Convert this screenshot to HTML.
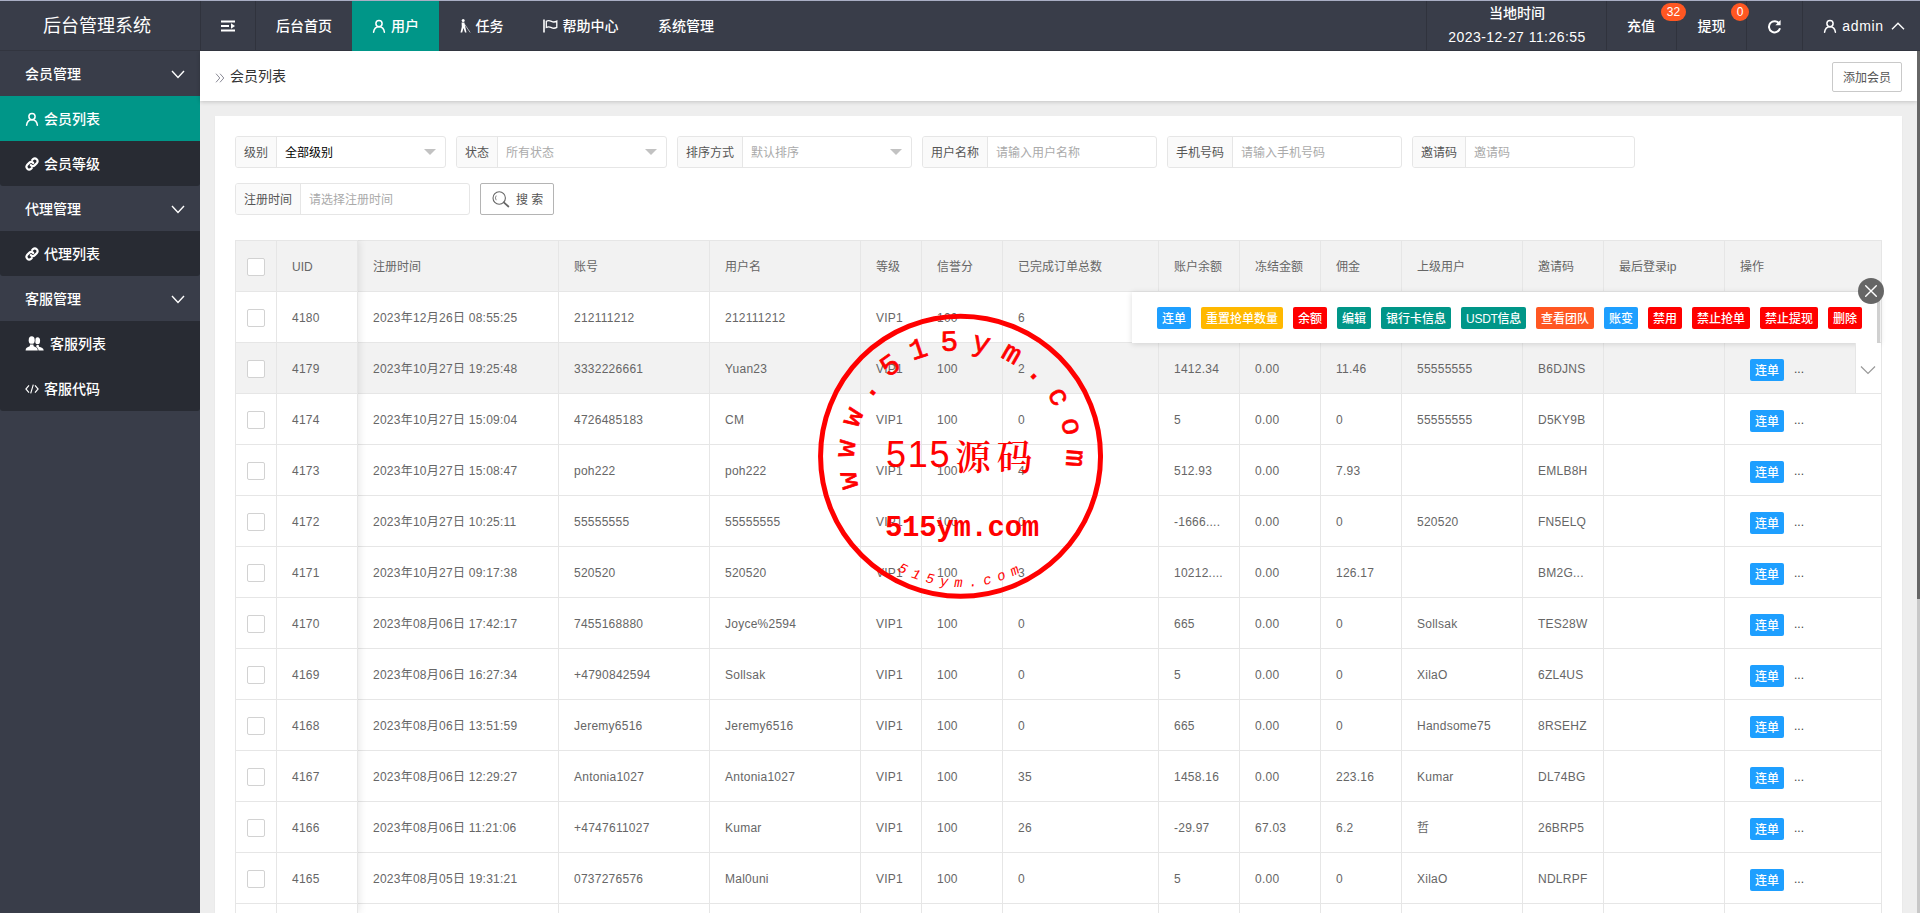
<!DOCTYPE html>
<html lang="zh-CN">
<head>
<meta charset="utf-8">
<title>后台管理系统</title>
<style>
*{box-sizing:border-box;margin:0;padding:0}
html,body{width:1920px;height:913px;overflow:hidden}
body{font-family:"Liberation Sans","Noto Sans CJK SC",sans-serif;font-size:14px;color:#333;background:#eee;position:relative}
ul{list-style:none}
.abs{position:absolute}
/* top line */
#topline{position:absolute;left:0;top:0;width:1920px;height:1px;background:#a9aec4;z-index:50}
/* header */
#header{position:absolute;left:0;top:0;width:1920px;height:51px;background:#393d49;color:#fff;z-index:10;font-weight:500}
#logo{font-weight:normal;position:absolute;left:0;top:1px;width:200px;height:49px;line-height:51px;text-align:center;font-size:18px;color:#fff;padding-right:6px}
#header .hline{position:absolute;left:0;top:50px;width:1920px;height:1px;background:#32353f}
.nav{position:absolute;top:1px;height:49px;line-height:51px;font-size:14px;color:#fff;text-align:center;white-space:nowrap}
.nav.bl{border-left:1px solid #30333d}
.nav svg{vertical-align:middle;position:relative;top:-1px}
.badge{font-weight:normal;position:absolute;top:3px;height:18px;line-height:18px;border-radius:9px;background:#ff5722;color:#fff;font-size:12px;text-align:center;z-index:3}
/* sidebar */
#side{position:absolute;left:0;top:51px;width:200px;height:862px;background:#393d49;color:#fff;font-weight:500}
#side .grp{height:45px;line-height:47px;padding-left:25px;font-size:14px;position:relative}
#side .grp svg{position:absolute;right:15px;top:19px}
#side .sub{background:#282b33;border-radius:0 0 3px 3px}
#side .it{height:45px;line-height:47px;padding-left:25px;font-size:14px;white-space:nowrap}
#side .it svg{vertical-align:middle;position:relative;top:-1px;margin-right:5px}
#side .it.on{background:#009688}
/* breadcrumb */
#crumb{position:absolute;left:200px;top:51px;width:1717px;height:50px;background:#fff;box-shadow:0 1px 4px rgba(0,0,0,.18)}
#crumb .t{position:absolute;left:30px;top:0;line-height:51px;font-size:14px;color:#333}
#crumb .t i{font-style:normal;color:#999;margin-right:4px}
#addbtn{position:absolute;left:1632px;top:11px;width:70px;height:30px;line-height:30px;border:1px solid #c9c9c9;border-radius:2px;font-size:12px;color:#555;text-align:center;background:#fff}
/* scrollbar */
#sbt{position:absolute;left:1917px;top:51px;width:3px;height:862px;background:#c8c8c8}
#sbh{position:absolute;left:1917px;top:51px;width:3px;height:548px;background:#666}
/* card */
#card{position:absolute;left:215px;top:116px;width:1687px;height:797px;background:#fff;box-shadow:0 1px 2px rgba(0,0,0,.05)}

/* filters */
.fg{position:absolute;height:32px;border:1px solid #e6e6e6;border-radius:3px;background:#fff;font-size:12px;overflow:hidden}
.fg .lb{position:absolute;left:0;top:0;height:30px;line-height:32px;background:#fafafa;border-right:1px solid #e6e6e6;color:#555;text-align:center;white-space:nowrap}
.fg .in{position:absolute;top:0;height:30px;line-height:32px;padding-left:8px;color:#aaa;white-space:nowrap}
.fg .in.v{color:#000}
.fg .tri{position:absolute;right:9px;top:12px;width:0;height:0;border-left:6px solid transparent;border-right:6px solid transparent;border-top:6px solid #c2c2c2}
#sbtn{position:absolute;left:265px;top:67px;width:74px;height:32px;border:1px solid #b4b4b4;border-radius:2px;background:#fff;font-size:12px;color:#555;line-height:32px;white-space:nowrap}
#sbtn svg{position:absolute;left:11px;top:7px}
#sbtn span{position:absolute;left:35px;top:0}
/* table */
#tbl{position:absolute;left:20px;top:124px;width:1647px;border-collapse:separate;border-spacing:0;table-layout:fixed;font-size:12px;color:#666;border-top:1px solid #e6e6e6;border-left:1px solid #e6e6e6}
#tbl th,#tbl td{height:51px;border-right:1px solid #e6e6e6;border-bottom:1px solid #e6e6e6;padding:0 0 0 15px;text-align:left;font-weight:normal;white-space:nowrap;overflow:hidden;vertical-align:middle;letter-spacing:.25px;line-height:20px;padding-top:1px}
#tbl th{background:#f2f2f2;letter-spacing:0}
#tbl tr.hov td{background:#f2f2f2}
#tbl td.c,#tbl th.c{padding:0;text-align:center;letter-spacing:0}
.cb{display:inline-block;width:18px;height:18px;border:1px solid #d2d2d2;border-radius:2px;background:#fff;vertical-align:middle;position:relative;top:0}
.xs{display:inline-block;height:22px;line-height:24px;padding:0 5px;border-radius:2px;color:#fff;font-size:12px;font-weight:500;letter-spacing:0;vertical-align:middle;white-space:nowrap}
.b-blue{background:#1e9fff}.b-warm{background:#ffb800}.b-red{background:#ff0000}.b-teal{background:#009688}.b-org{background:#ff5722}
#tbl td.op{padding-left:25px}
#tbl td.op .xs{position:relative;top:1.500px}
#tbl td.op em{color:#444;font-style:normal;margin-left:10px;position:relative;top:1px;letter-spacing:0}
#fixshadow{position:absolute;left:20px;top:124px;width:123px;height:673px;box-shadow:1px 0 8px rgba(0,0,0,.10);pointer-events:none;clip-path:inset(0 -12px 0 0)}
/* tips panel */
#tips{position:absolute;left:917px;top:176px;width:748px;height:51px;background:#fff;box-shadow:0 1px 6px rgba(0,0,0,.14);white-space:nowrap;padding:15px 0 0 25px;font-size:0}
#tips .xs{margin-right:10px}
#tips .bar{position:absolute;right:0;top:0;width:3px;height:51px;background:#d0d0d0}
#tipx{position:absolute;left:1643px;top:162px;width:26px;height:26px;border-radius:13px;background:#666}
#griddown{position:absolute;left:1640px;top:227px;width:26px;height:50px;background:#fff;border-left:1px solid #e6e6e6}

/* stamp */
#stamp{position:absolute;left:810px;top:306px;z-index:5;pointer-events:none}
</style>
</head>
<body>
<div id="header">
  <div id="logo">后台管理系统</div>

  <div class="nav bl" style="left:200px;width:55px"><svg width="14" height="14" viewBox="0 0 14 14" fill="#fff"><rect x="0" y="1.500" width="14" height="2"/><rect x="0" y="6" width="8" height="2"/><rect x="0" y="10.500" width="14" height="2"/><path d="M10 4.300l4 2.700-4 2.700z"/></svg></div>
  <div class="nav bl" style="left:255px;width:97px">后台首页</div>
  <div class="nav" style="left:352px;width:87px;background:#009688;top:1px;height:50px;z-index:2"><svg width="14" height="14" viewBox="0 0 14 14" fill="none" stroke="#fff" stroke-width="1.5" stroke-linecap="round"><circle cx="7" cy="4.6" r="3.1"/><path d="M1.6 13.2c.4-3.3 2.5-5.4 5.4-5.4s5 2.100 5.400 5.400"/></svg><span style="margin-left:5px">用户</span></div>
  <div class="nav" style="left:439px;width:84px"><svg width="12" height="14" viewBox="0 0 12 14" fill="#fff"><circle cx="4.200" cy="1.500" r="1.500"/><path d="M2.600 3.400h2.800l.8 4.200 1.300 5.900H6l-1.500-4.600-1.300 4.600H1.500l1.300-5.700z"/><path d="M5.600 5.200l5.600 8.300" stroke="#fff" stroke-width=".6"/></svg><span style="margin-left:5px">任务</span></div>
  <div class="nav" style="left:523px;width:115px"><svg width="15" height="14" viewBox="0 0 15 14" fill="none" stroke="#fff" stroke-width="1.300"><path d="M1 .5v13" stroke-width="1.600"/><path d="M3.300 2.200c2-1.100 3.600-.6 5.200.2 1.600.8 3.400.8 5.300-.3v6.300c-1.900 1.100-3.700 1.100-5.300.3-1.600-.8-3.200-1.300-5.200-.2z"/></svg><span style="margin-left:5px">帮助中心</span></div>
  <div class="nav" style="left:638px;width:96px">系统管理</div>

  <div class="nav bl" style="left:1426px;width:180px;line-height:normal"><div style="position:absolute;left:0;width:180px;top:2px;line-height:20px">当地时间</div><div style="position:absolute;left:0;width:180px;top:26px;line-height:20px;letter-spacing:.45px">2023-12-27 11:26:55</div></div>
  <div class="nav bl" style="left:1606px;width:69px">充值</div>
  <div class="nav bl" style="left:1676px;width:70px">提现</div>
  <div class="badge" style="left:1661px;width:25px">32</div>
  <div class="badge" style="left:1731px;width:18px">0</div>
  <div class="nav bl" style="left:1746px;width:55px"><svg width="15" height="15" viewBox="0 0 15 15" fill="none" stroke="#fff" stroke-width="2"><path d="M12.300 4.700A5.600 5.600 0 1 0 13 9.300"/><path d="M13.600 1v5.200H8.400z" fill="#fff" stroke="none"/></svg></div>
  <div class="nav bl" style="left:1802px;width:115px;padding-left:8px"><svg width="14" height="14" viewBox="0 0 14 14" fill="none" stroke="#fff" stroke-width="1.5" stroke-linecap="round"><circle cx="7" cy="4.6" r="3.1"/><path d="M1.6 13.2c.4-3.3 2.5-5.4 5.4-5.4s5 2.100 5.400 5.400"/></svg><span style="margin-left:5px;letter-spacing:.7px">admin</span><svg width="14" height="8" viewBox="0 0 14 8" fill="none" stroke="#fff" stroke-width="1.400" style="margin-left:7px"><path d="M1 7.200l6-6 6 6"/></svg></div>
  <div class="hline"></div>
</div>
<div id="topline"></div>
<div id="side">
  <div class="grp">会员管理<svg width="14" height="9" viewBox="0 0 14 9" fill="none" stroke="#fff" stroke-width="1.400"><path d="M1 1l6 6.500L13 1"/></svg></div>
  <div class="sub"><div class="it on"><svg width="14" height="14" viewBox="0 0 14 14" fill="none" stroke="#fff" stroke-width="1.5" stroke-linecap="round"><circle cx="7" cy="4.6" r="3.1"/><path d="M1.6 13.2c.4-3.3 2.5-5.4 5.4-5.4s5 2.100 5.400 5.400"/></svg>会员列表</div><div class="it"><svg width="14" height="14" viewBox="0 0 15 15" fill="none" stroke="#fff" stroke-width="2.300" stroke-linecap="round"><path d="M6.300 8.700a3 3 0 0 0 4.200 0l2.300-2.300a3 3 0 0 0-4.200-4.200l-.9.900"/><path d="M8.700 6.300a3 3 0 0 0-4.200 0L2.200 8.600a3 3 0 0 0 4.200 4.200l.9-.9"/></svg>会员等级</div></div>
  <div class="grp">代理管理<svg width="14" height="9" viewBox="0 0 14 9" fill="none" stroke="#fff" stroke-width="1.400"><path d="M1 1l6 6.500L13 1"/></svg></div>
  <div class="sub"><div class="it"><svg width="14" height="14" viewBox="0 0 15 15" fill="none" stroke="#fff" stroke-width="2.300" stroke-linecap="round"><path d="M6.300 8.700a3 3 0 0 0 4.200 0l2.300-2.300a3 3 0 0 0-4.200-4.200l-.9.900"/><path d="M8.700 6.300a3 3 0 0 0-4.200 0L2.200 8.600a3 3 0 0 0 4.200 4.200l.9-.9"/></svg>代理列表</div></div>
  <div class="grp">客服管理<svg width="14" height="9" viewBox="0 0 14 9" fill="none" stroke="#fff" stroke-width="1.400"><path d="M1 1l6 6.500L13 1"/></svg></div>
  <div class="sub"><div class="it"><svg width="20" height="15" viewBox="0 0 20 15" fill="#fff" style="top:-2px"><ellipse cx="12.600" cy="4.800" rx="2.500" ry="3.500"/><path d="M8 14.500c0-2.300 1.300-3 3.300-3.800l.3-1.700h2.100l.3 1.700c2.400.8 4.700 1.500 4.700 3.800z"/><g stroke="#282b33" stroke-width="1.400" paint-order="stroke"><ellipse cx="6.700" cy="4.300" rx="3" ry="4"/><path d="M.6 14.500c0-2.600 1.700-3.300 4.100-4.200l.4-1.800h3.200l.4 1.800c2.400.9 4.100 1.600 4.100 4.200z"/></g></svg>客服列表</div><div class="it"><svg width="14" height="10" viewBox="0 0 14 10" fill="none" stroke="#fff" stroke-width="1.150"><path d="M4 1.400L.9 5 4 8.600M10 1.400L13.100 5 10 8.600M8.300.6L5.700 9.400"/></svg>客服代码</div></div>
</div>
<div id="crumb">
  <svg style="position:absolute;left:15px;top:22px" width="10" height="10" viewBox="0 0 10 10" fill="none" stroke="#8a8a96" stroke-width="1"><path d="M1 .7l3.800 4.300L1 9.300M5 .7l3.800 4.300L5 9.300"/></svg><div class="t">会员列表</div>
  <div id="addbtn">添加会员</div>
</div>
<div id="sbt"></div><div id="sbh"></div>
<div id="card">
<div class="fg" style="left:20px;top:20px;width:211px"><div class="lb" style="width:41px">级别</div><div class="in v" style="left:41px">全部级别</div><div class="tri"></div></div><div class="fg" style="left:241px;top:20px;width:211px"><div class="lb" style="width:41px">状态</div><div class="in" style="left:41px">所有状态</div><div class="tri"></div></div><div class="fg" style="left:462px;top:20px;width:235px"><div class="lb" style="width:65px">排序方式</div><div class="in" style="left:65px">默认排序</div><div class="tri"></div></div><div class="fg" style="left:707px;top:20px;width:235px"><div class="lb" style="width:65px">用户名称</div><div class="in" style="left:65px">请输入用户名称</div></div><div class="fg" style="left:952px;top:20px;width:235px"><div class="lb" style="width:65px">手机号码</div><div class="in" style="left:65px">请输入手机号码</div></div><div class="fg" style="left:1197px;top:20px;width:223px"><div class="lb" style="width:53px">邀请码</div><div class="in" style="left:53px">邀请码</div></div><div class="fg" style="left:20px;top:67px;width:235px"><div class="lb" style="width:65px">注册时间</div><div class="in" style="left:65px">请选择注册时间</div></div><div id="sbtn"><svg width="18" height="17" viewBox="0 0 18 17" fill="none" stroke="#666" stroke-width="1.100"><circle cx="7.200" cy="7" r="6.200"/><path d="M11.800 11.300l4.600 4.200" stroke-width="1.700" stroke-linecap="round"/><path d="M4.200 4.600a4 4 0 0 0 0 4.600" stroke-width=".8"/></svg><span>搜 索</span></div>
<table id="tbl"><colgroup><col style="width:41px"><col style="width:81px"><col style="width:201px"><col style="width:151px"><col style="width:151px"><col style="width:61px"><col style="width:81px"><col style="width:156px"><col style="width:81px"><col style="width:81px"><col style="width:81px"><col style="width:121px"><col style="width:81px"><col style="width:121px"><col style="width:157px"></colgroup>
<thead><tr><th class="c"><span class="cb"></span></th><th>UID</th><th>注册时间</th><th>账号</th><th>用户名</th><th>等级</th><th>信誉分</th><th>已完成订单总数</th><th>账户余额</th><th>冻结金额</th><th>佣金</th><th>上级用户</th><th>邀请码</th><th>最后登录ip</th><th>操作</th></tr></thead>
<tbody>
<tr><td class="c"><span class="cb"></span></td><td>4180</td><td>2023年12月26日 08:55:25</td><td>212111212</td><td>212111212</td><td>VIP1</td><td>100</td><td>6</td><td></td><td></td><td></td><td></td><td></td><td></td><td></td></tr>
<tr class="hov"><td class="c"><span class="cb"></span></td><td>4179</td><td>2023年10月27日 19:25:48</td><td>3332226661</td><td>Yuan23</td><td>VIP1</td><td>100</td><td>2</td><td>1412.34</td><td>0.00</td><td>11.46</td><td>55555555</td><td>B6DJNS</td><td></td><td class="op"><span class="xs b-blue">连单</span><em>...</em></td></tr>
<tr><td class="c"><span class="cb"></span></td><td>4174</td><td>2023年10月27日 15:09:04</td><td>4726485183</td><td>CM</td><td>VIP1</td><td>100</td><td>0</td><td>5</td><td>0.00</td><td>0</td><td>55555555</td><td>D5KY9B</td><td></td><td class="op"><span class="xs b-blue">连单</span><em>...</em></td></tr>
<tr><td class="c"><span class="cb"></span></td><td>4173</td><td>2023年10月27日 15:08:47</td><td>poh222</td><td>poh222</td><td>VIP1</td><td>100</td><td>4</td><td>512.93</td><td>0.00</td><td>7.93</td><td></td><td>EMLB8H</td><td></td><td class="op"><span class="xs b-blue">连单</span><em>...</em></td></tr>
<tr><td class="c"><span class="cb"></span></td><td>4172</td><td>2023年10月27日 10:25:11</td><td>55555555</td><td>55555555</td><td>VIP1</td><td>100</td><td>0</td><td>-1666....</td><td>0.00</td><td>0</td><td>520520</td><td>FN5ELQ</td><td></td><td class="op"><span class="xs b-blue">连单</span><em>...</em></td></tr>
<tr><td class="c"><span class="cb"></span></td><td>4171</td><td>2023年10月27日 09:17:38</td><td>520520</td><td>520520</td><td>VIP1</td><td>100</td><td>3</td><td>10212....</td><td>0.00</td><td>126.17</td><td></td><td>BM2G...</td><td></td><td class="op"><span class="xs b-blue">连单</span><em>...</em></td></tr>
<tr><td class="c"><span class="cb"></span></td><td>4170</td><td>2023年08月06日 17:42:17</td><td>7455168880</td><td>Joyce%2594</td><td>VIP1</td><td>100</td><td>0</td><td>665</td><td>0.00</td><td>0</td><td>Sollsak</td><td>TES28W</td><td></td><td class="op"><span class="xs b-blue">连单</span><em>...</em></td></tr>
<tr><td class="c"><span class="cb"></span></td><td>4169</td><td>2023年08月06日 16:27:34</td><td>+4790842594</td><td>Sollsak</td><td>VIP1</td><td>100</td><td>0</td><td>5</td><td>0.00</td><td>0</td><td>XilaO</td><td>6ZL4US</td><td></td><td class="op"><span class="xs b-blue">连单</span><em>...</em></td></tr>
<tr><td class="c"><span class="cb"></span></td><td>4168</td><td>2023年08月06日 13:51:59</td><td>Jeremy6516</td><td>Jeremy6516</td><td>VIP1</td><td>100</td><td>0</td><td>665</td><td>0.00</td><td>0</td><td>Handsome75</td><td>8RSEHZ</td><td></td><td class="op"><span class="xs b-blue">连单</span><em>...</em></td></tr>
<tr><td class="c"><span class="cb"></span></td><td>4167</td><td>2023年08月06日 12:29:27</td><td>Antonia1027</td><td>Antonia1027</td><td>VIP1</td><td>100</td><td>35</td><td>1458.16</td><td>0.00</td><td>223.16</td><td>Kumar</td><td>DL74BG</td><td></td><td class="op"><span class="xs b-blue">连单</span><em>...</em></td></tr>
<tr><td class="c"><span class="cb"></span></td><td>4166</td><td>2023年08月06日 11:21:06</td><td>+4747611027</td><td>Kumar</td><td>VIP1</td><td>100</td><td>26</td><td>-29.97</td><td>67.03</td><td>6.2</td><td>哲</td><td>26BRP5</td><td></td><td class="op"><span class="xs b-blue">连单</span><em>...</em></td></tr>
<tr><td class="c"><span class="cb"></span></td><td>4165</td><td>2023年08月05日 19:31:21</td><td>0737276576</td><td>Mal0uni</td><td>VIP1</td><td>100</td><td>0</td><td>5</td><td>0.00</td><td>0</td><td>XilaO</td><td>NDLRPF</td><td></td><td class="op"><span class="xs b-blue">连单</span><em>...</em></td></tr>
<tr><td class="c"><span class="cb"></span></td><td></td><td></td><td></td><td></td><td></td><td></td><td></td><td></td><td></td><td></td><td></td><td></td><td></td><td></td></tr>
</tbody></table>
<div id="fixshadow"></div>
<div id="tips"><span class="xs b-blue">连单</span><span class="xs b-warm">重置抢单数量</span><span class="xs b-red">余额</span><span class="xs b-teal">编辑</span><span class="xs b-teal">银行卡信息</span><span class="xs b-teal" style="letter-spacing:-.3px">USDT信息</span><span class="xs b-org">查看团队</span><span class="xs b-blue">账变</span><span class="xs b-red">禁用</span><span class="xs b-red">禁止抢单</span><span class="xs b-red">禁止提现</span><span class="xs b-red">删除</span><div class="bar"></div></div><div id="tipx"><svg width="26" height="26" viewBox="0 0 26 26" stroke="#fff" stroke-width="1.400" stroke-linecap="round"><path d="M7.700 7.700l10.600 10.600M18.300 7.700l-10.600 10.600"/></svg></div><div id="griddown"><svg width="16" height="10" viewBox="0 0 16 10" fill="none" stroke="#999" stroke-width="1.200" style="position:absolute;left:4px;top:22px"><path d="M1 1.500l7 7 7-7"/></svg></div>
</div>
<svg id="stamp" width="300" height="300" viewBox="0 0 300 300">
<defs><path id="arcTop" d="M49.24 181.52A106.0 106.0 0 1 1 254.04 173.29"/><path id="arcBot" d="M87.39 264.55A130.5 130.5 0 0 0 222.20 259.42"/></defs>
<circle cx="150.55" cy="150.35" r="140" fill="none" stroke="#f00" stroke-width="5"/>
<text font-family="Liberation Mono, monospace" font-size="29" fill="#f00" stroke="#f00" stroke-width="0.700" letter-spacing="12.34"><textPath href="#arcTop">www.515ym.com</textPath></text>
<text x="76" y="161.200" font-size="36" fill="#f00"><tspan font-family="Liberation Sans, sans-serif" letter-spacing="1.700">515</tspan><tspan font-family="Noto Serif CJK SC, serif" font-weight="600" font-size="35.500" dx="4" dy="2.600" letter-spacing="6">源码</tspan></text>
<text x="75" y="230" font-family="Liberation Mono, monospace" font-weight="bold" font-size="29" fill="#f00" letter-spacing="-0.300">515ym.com</text>
<text font-family="Liberation Mono, monospace" font-style="italic" font-size="14" fill="#f00" letter-spacing="6.52"><textPath href="#arcBot">515ym.com</textPath></text>
</svg>
</body>
</html>
